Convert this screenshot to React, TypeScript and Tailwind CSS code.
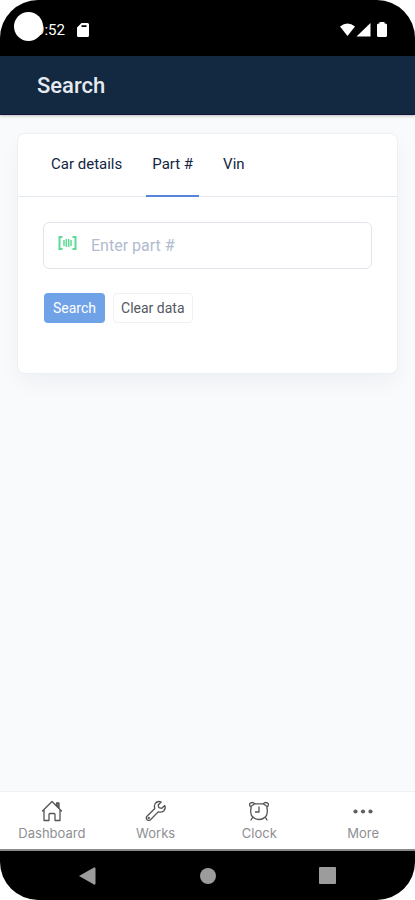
import { useState } from "react";
import type { ReactNode } from "react";

function StatusBar() {
  return (
    <div className="relative flex h-14 shrink-0 items-center justify-between bg-black pr-7 pl-9 pt-1 text-white">
      <div className="flex items-center gap-3">
        <span className="text-[15px] leading-5">9:52</span>
        <svg width="12" height="14" viewBox="0 0 12 14" fill="currentColor" aria-hidden="true">
          <path
            fillRule="evenodd"
            d="M4.500 0H10.500Q12 0 12 1.500V12.500Q12 14 10.500 14H1.500Q0 14 0 12.500V4.500ZM4.500 2.200V4H9.500V2.200Z"
          />
        </svg>
      </div>
      <div className="flex items-center gap-1.5">
        <svg width="31" height="16" viewBox="0 0 31 16" fill="currentColor" aria-hidden="true">
          <path d="M0 4.500Q7.500 -1.500 15 4.500L7.500 14Z" />
          <path d="M16.500 14.500L30.500 1V14.500Z" />
        </svg>
        <svg width="10" height="16" viewBox="0 0 10 16" fill="currentColor" aria-hidden="true">
          <path d="M2.500 1.500V0H7.500V1.500H8.500Q10 1.500 10 3V13.500Q10 15 8.500 15H1.500Q0 15 0 13.500V3Q0 1.500 1.500 1.500Z" />
        </svg>
      </div>
      {/* camera cutout */}
      <div className="absolute top-3 left-3.5 size-[29px] rounded-full bg-white" />
    </div>
  );
}

function BarcodeIcon() {
  return (
    <svg width="19" height="14" viewBox="0 0 19 14" fill="none" stroke="#5cdb95" aria-hidden="true">
      <path strokeWidth="2" d="M4.500 1H1.500V13H4.500M14.500 1H17.500V13H14.500" />
      <path strokeWidth="1.500" d="M6 4V10M8.300 3V11M10.700 3V11M13 4V10" />
    </svg>
  );
}

const tabs = ["Car details", "Part #", "Vin"];

function SearchCard() {
  const [active, setActive] = useState("Part #");
  const [part, setPart] = useState("");

  return (
    <section className="mx-[17px] mt-[18px] rounded-lg border border-[#eceff3] bg-white pb-[50px] shadow-[0_10px_20px_rgba(18,38,63,0.04)]">
      <div role="tablist" className="flex h-[63px] gap-[18px] border-b border-[#e3e9ef] pl-[27px]">
        {tabs.map((tab) => (
          <button
            key={tab}
            type="button"
            role="tab"
            aria-selected={active === tab}
            onClick={() => setActive(tab)}
            className={`-mb-px border-b-2 px-1.5 pb-0.5 text-[15px] leading-5 text-[#12263f] ${
              active === tab ? "border-[#5785dc]" : "border-transparent"
            }`}
          >
            {tab}
          </button>
        ))}
      </div>
      <form className="px-[25px] pt-[25px]" onSubmit={(e) => e.preventDefault()}>
        <label className="flex h-[47px] items-center rounded-md border border-[#e1e5eb] pl-3.5">
          <span className="mb-1.5">
            <BarcodeIcon />
          </span>
          <input
            type="text"
            aria-label="Part number"
            value={part}
            onChange={(e) => setPart(e.target.value)}
            placeholder="Enter part #"
            className="ml-3.5 min-w-0 flex-1 text-base text-[#12263f] outline-none placeholder:text-[#b1bccf]"
          />
        </label>
        <div className="mt-6 flex gap-2 pl-px">
          <button type="submit" className="h-[30px] rounded bg-[#70a2e8] px-[9px] text-sm text-white">
            Search
          </button>
          <button
            type="button"
            onClick={() => setPart("")}
            className="h-[30px] rounded border border-[#eff1f4] px-[7px] text-sm text-[#55585f]"
          >
            Clear data
          </button>
        </div>
      </form>
    </section>
  );
}

interface NavItemProps {
  label: string;
  children: ReactNode;
}

function NavItem({ label, children }: NavItemProps) {
  return (
    <a href="#" className="flex flex-1 flex-col items-center gap-0.5 pt-[7px] text-[13px] leading-4 text-[#8d8f92]">
      <svg
        width="24"
        height="24"
        viewBox="0 0 24 24"
        fill="none"
        stroke="#555555"
        strokeWidth="1.300"
        strokeLinecap="round"
        strokeLinejoin="round"
        aria-hidden="true"
      >
        {children}
      </svg>
      {label}
    </a>
  );
}

function BottomNav() {
  return (
    <nav className="flex h-[60px] shrink-0 border-t border-b-2 border-t-[#eff1f5] border-b-[#8a8a8a] bg-white font-['Inter',sans-serif]">
      <NavItem label="Dashboard">
        <path d="M2.500 12L12 2.500L21.500 12M4 11V21.500H9V15.500Q9 14.500 10 14.500H14Q15 14.500 15 15.500V21.500H20V11" />
        <path d="M16.500 6.500V4H19V9Z" fill="#777777" />
      </NavItem>
      <NavItem label="Works">
        <path d="M20.800 6.500L17.700 9.300L14.800 8.700L14.200 6L17.200 3Q13.500 1.500 11.200 4.500Q9.800 6.500 10.800 9.500L3 17.200Q1.500 19 3 20.700Q4.800 22.200 6.500 20.700L14.200 12.900Q17.500 13.800 19.700 12Q22 9.700 20.800 6.500Z" />
        <circle cx="4.800" cy="19" r=".5" />
      </NavItem>
      <NavItem label="Clock">
        <path d="M8 4.800H16M19.800 8.500Q21 12.500 19.500 16.500Q16.500 20.500 12 20.500Q7.500 20.500 4.500 16.500Q3 12.500 4.200 8.500" />
        <path d="M12 8V13H8.500M5.500 18.500L4 21M18.500 18.500L20 21" />
        <path d="M3.500 7.800Q1.500 4.800 3.800 3.800Q6.200 2.800 7.800 4.800ZM20.500 7.800Q22.500 4.800 20.200 3.800Q17.800 2.800 16.200 4.800Z" />
      </NavItem>
      <NavItem label="More">
        <g fill="#606060" stroke="none">
          <circle cx="4.500" cy="12.500" r="2.100" />
          <circle cx="12" cy="12.500" r="2.100" />
          <circle cx="19.500" cy="12.500" r="2.100" />
        </g>
      </NavItem>
    </nav>
  );
}

function SystemNav() {
  return (
    <div className="flex h-[49px] shrink-0 items-center justify-between bg-black px-[79px] text-[#9c9c9c]">
      <button type="button" aria-label="Back">
        <svg width="17" height="18" viewBox="0 0 17 18" fill="currentColor">
          <path d="M0 9L15 .5Q16.500 0 16.500 1.500V16.500Q16.500 18 15 17.500Z" />
        </svg>
      </button>
      <button type="button" aria-label="Home" className="size-4 rounded-full bg-[#9c9c9c]" />
      <button type="button" aria-label="Recent apps" className="size-[17px] rounded-[1px] bg-[#9c9c9c]" />
    </div>
  );
}

export default function App() {
  return (
    <div className="min-h-screen bg-white font-['Roboto',sans-serif]">
      <div className="flex min-h-screen flex-col overflow-hidden rounded-[38px] bg-[#f9fafc]">
        <StatusBar />
        <header className="flex h-[59px] shrink-0 items-center border-b border-[#17123b] bg-[#132841] pt-0.5 pl-[37px] shadow-[0_1px_3px_rgba(0,0,0,0.25)]">
          <h1 className="text-[22px] leading-7 font-medium text-[#e6eaf0]">Search</h1>
        </header>
        <main className="flex-1">
          <SearchCard />
        </main>
        <BottomNav />
        <SystemNav />
      </div>
    </div>
  );
}
